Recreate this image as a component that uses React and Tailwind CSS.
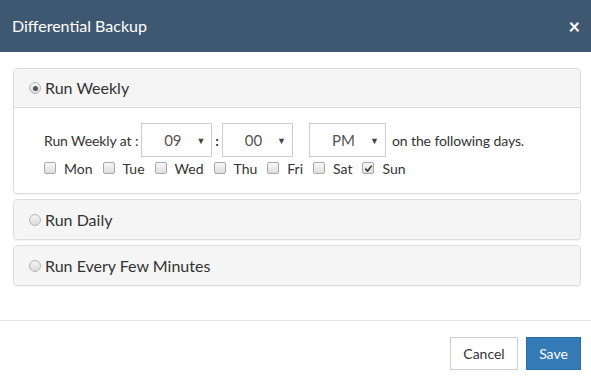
import React from "react";

function Radio({ checked }) {
  return (
    <span className="relative inline-block w-[12px] h-[12px] rounded-full border border-[#b5b5b5] bg-gradient-to-b from-[#f4f4f4] to-[#dcdcdc] shrink-0">
      {checked && (
        <span className="absolute left-[2.5px] top-[2.5px] w-[5px] h-[5px] rounded-full bg-[#555]" />
      )}
    </span>
  );
}

function Check({ checked }) {
  return (
    <span className="relative inline-flex items-center justify-center w-[12px] h-[12px] rounded-[2px] border border-[#a9a9a9] bg-gradient-to-b from-[#f7f7f7] to-[#dedede] shrink-0">
      {checked && (
        <svg width="9" height="9" viewBox="0 0 10 10">
          <path d="M1.5 5.2 L4 7.8 L8.6 1.8" fill="none" stroke="#333" strokeWidth="1.8" />
        </svg>
      )}
    </span>
  );
}

function Select({ value, w }) {
  return (
    <div className={`relative h-[34px] ${w} border border-[#ccc] bg-white flex items-center`}>
      <span className="flex-1 text-center pr-[8px] text-[15px] text-[#555]">{value}</span>
      <span className="absolute right-[6px] top-[10px] text-[9px] text-[#444]">▼</span>
    </div>
  );
}

function Panel({ title, checked, children }) {
  return (
    <div className="border border-[#ddd] rounded-[4px] bg-white shadow-[0_1px_1px_rgba(0,0,0,0.05)]">
      <div className={`h-[39px] bg-[#f5f5f5] flex items-center pl-[15px] gap-[4px] rounded-t-[4px] ${children ? "border-b border-[#ddd]" : "rounded-b-[4px]"}`}>
        <Radio checked={checked} />
        <span className="text-[16px] text-[#333]">{title}</span>
      </div>
      {children}
    </div>
  );
}

const days = ["Mon", "Tue", "Wed", "Thu", "Fri", "Sat", "Sun"];

export default function App() {
  return (
    <div className="w-[591px] h-[385px] bg-white flex flex-col" style={{ fontFamily: "Lato, 'Noto Sans', sans-serif" }}>
      <div className="h-[52px] bg-[#3f5872] flex items-center justify-between pl-[12px] pr-[11px] shrink-0">
        <span className="text-white text-[16px]">Differential Backup</span>
        <span className="text-white text-[20px] font-bold leading-none">×</span>
      </div>
      <div className="flex-1 pl-[13px] pr-[10px] pt-[16px] flex flex-col gap-[5px] border-b border-[#e5e5e5]">
        <Panel title="Run Weekly" checked>
          <div className="pl-[30px] pt-[15px] pb-[16px] text-[14px] text-[#333]">
            <div className="flex items-center">
              <span className="mr-[3px] tracking-[-0.1px]">Run Weekly at :</span>
              <Select value="09" w="w-[71px]" />
              <span className="mx-[3px] font-bold">:</span>
              <Select value="00" w="w-[71px]" />
              <span className="w-[16px]" />
              <Select value="PM" w="w-[77px]" />
              <span className="ml-[6px] tracking-[-0.1px]">on the following days.</span>
            </div>
            <div className="flex items-center mt-[2px] h-[18px]">
              {days.map((d) => (
                <span key={d} className="flex items-center mr-[10px]">
                  <Check checked={d === "Sun"} />
                  <span className="ml-[8px]">{d}</span>
                </span>
              ))}
            </div>
          </div>
        </Panel>
        <Panel title="Run Daily" />
        <Panel title="Run Every Few Minutes" />
      </div>
      <div className="h-[64px] shrink-0 flex items-center justify-end gap-[8px] pr-[10px]">
        <button className="h-[33px] w-[68px] border border-[#ccc] bg-white text-[14px] text-[#333]">Cancel</button>
        <button className="h-[33px] w-[55px] border border-[#2e6da4] bg-[#337ab7] text-[14px] text-white">Save</button>
      </div>
    </div>
  );
}
